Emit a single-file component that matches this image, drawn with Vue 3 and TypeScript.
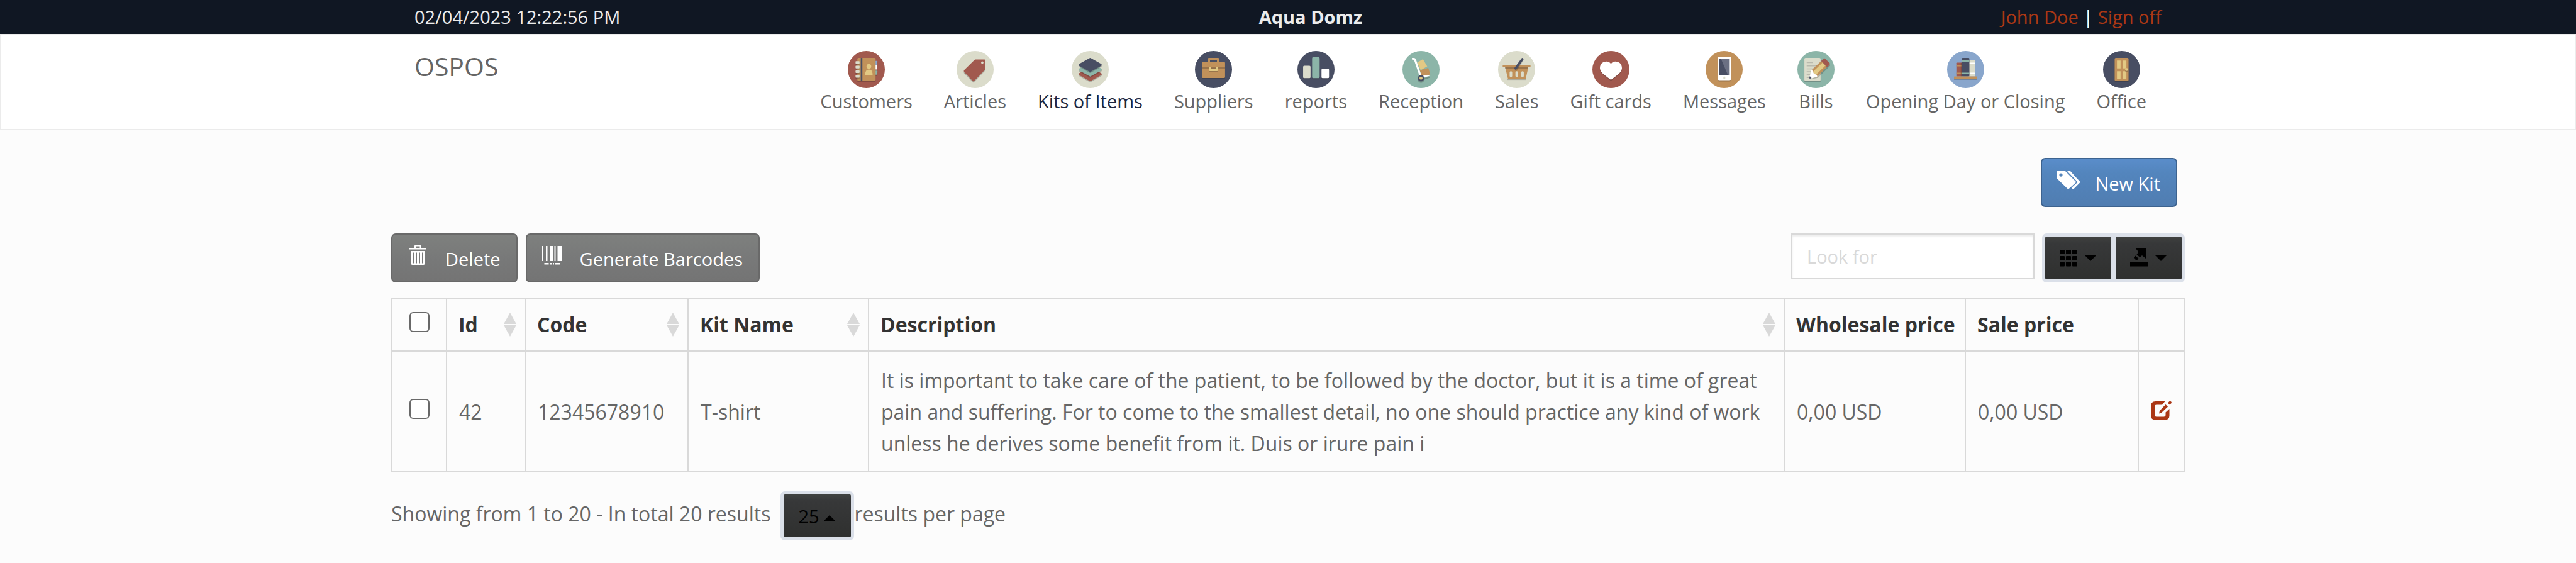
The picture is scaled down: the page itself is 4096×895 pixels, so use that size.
<script setup lang="ts">
import { ref } from 'vue'

interface Layer {
  d: string
  fill: string
}
interface Module {
  label: string
  disc: string
  layers: Layer[]
}

const navy = '#484e63'
const red = '#a1594e'
const tan = '#c1915a'
const beige = '#dbdccb'
const green = '#8cb5a8'
const blue = '#89a6cc'
const yellow = '#e2c984'
const white = '#ffffff'
const shade = 'rgba(35, 31, 32, 0.25)'

const box = (x: number, y: number, w: number, h: number, r = 0): string =>
  `M${x + r} ${y}h${w - 2 * r}a${r} ${r} 0 0 1 ${r} ${r}v${h - 2 * r}a${r} ${r} 0 0 1 ${-r} ${r}h${2 * r - w}a${r} ${r} 0 0 1 ${-r} ${-r}v${2 * r - h}a${r} ${r} 0 0 1 ${r} ${-r}z`
const dot = (cx: number, cy: number, r: number): string =>
  `M${cx - r} ${cy}a${r} ${r} 0 1 0 ${2 * r} 0a${r} ${r} 0 1 0 ${-2 * r} 0z`
const rhomb = (cy: number): string =>
  `M30.6 ${cy - 11.4}q1.4 -1.2 2.8 0l17.8 9.9q1.8 1.5 0 3l-17.8 10q-1.4 1.2 -2.8 0l-17.8 -10q-1.8 -1.5 0 -3z`

const rings = [17.5, 25.5, 33.5, 41.5]

const modules: Module[] = [
  {
    label: 'Customers',
    disc: red,
    layers: [
      { d: box(16.5, 14, 31.5, 40, 2), fill: shade },
      { d: box(46, 19, 5, 24, 1), fill: shade },
      { d: box(46, 17, 5, 7, 1), fill: blue },
      { d: box(46, 25, 5, 7, 1), fill: white },
      { d: box(46, 34, 5, 7, 1), fill: green },
      { d: box(16.5, 12, 31.5, 40, 2), fill: tan },
      { d: box(22.4, 12, 2.8, 40), fill: navy },
      { d: rings.map((y) => box(13.4, y + 2, 7, 4.5, 1)).join(''), fill: shade },
      { d: rings.map((y) => box(13.4, y, 7, 4.5, 1)).join(''), fill: beige },
      { d: dot(36.4, 26.7, 4.1) + 'M30 42v-3q1 -7 6.4 -7q5.6 0 6.4 7v3z', fill: yellow },
    ],
  },
  {
    label: 'Articles',
    disc: beige,
    layers: [
      { d: 'M31.8 16.7H48q1.4 0 1.4 1.4V34L30 54q-1 1 -2 0L13 38.5q-1 -1.5 0 -3z', fill: shade },
      { d: 'M31.8 14.7H48q1.4 0 1.4 1.4V32L30 52q-1 1 -2 0L13 36q-1 -1.5 0 -3z', fill: red },
      { d: dot(44.4, 20, 2), fill: beige },
    ],
  },
  {
    label: 'Kits of Items',
    disc: beige,
    layers: [
      { d: rhomb(42), fill: shade },
      { d: rhomb(40), fill: red },
      { d: rhomb(34), fill: shade },
      { d: rhomb(32), fill: green },
      { d: rhomb(26), fill: shade },
      { d: rhomb(24), fill: navy },
    ],
  },
  {
    label: 'Suppliers',
    disc: navy,
    layers: [
      { d: box(12, 20.7, 40, 28, 2), fill: shade },
      { d: 'M22 20v-6q0 -2 2 -2h16q2 0 2 2v6h-4v-4H26v4z', fill: tan },
      { d: box(12, 18.7, 40, 28, 2), fill: tan },
      { d: box(12, 28, 40, 2.6), fill: shade },
      { d: box(24, 30, 16, 6.6, 2), fill: shade },
      { d: 'M24 28h4v2.7h8V28h4v4.7q0 2 -2 2h-12q-2 0 -2 -2z', fill: yellow },
    ],
  },
  {
    label: 'reports',
    disc: navy,
    layers: [
      { d: box(9.8, 29, 12.8, 20, 2) + box(25.3, 29, 13, 20, 2) + box(41.5, 32, 13, 17, 2), fill: shade },
      { d: box(9.8, 25.5, 12.8, 21.5, 2), fill: beige },
      { d: box(25.3, 10.7, 13, 36.3, 2), fill: green },
      { d: box(41.5, 30.5, 13, 16.5, 2), fill: white },
    ],
  },
  {
    label: 'Reception',
    disc: green,
    layers: [
      { d: dot(32, 49.5, 5.5) + 'M37 47l10 -2.5v2l-10 3z', fill: shade },
      { d: 'M25.3 20l10 -6 7.4 12.5 -11.2 6.5z', fill: yellow },
      { d: 'M29.8 33.3l14.7 -4 3.5 11 -14.3 3.7z', fill: tan },
      { d: 'M16.5 12h3q3 0 4 3.2L33 43.5l11 -2.5q2.5 0 2.5 2l-14 4 -2.5 -2L20.5 17q-0.6 -2 -2.5 -2h-1.5q-1 -1.5 0 -3z', fill: white },
      { d: dot(32, 47, 5.5), fill: navy },
      { d: dot(32, 47, 2.7), fill: yellow },
    ],
  },
  {
    label: 'Sales',
    disc: beige,
    layers: [
      { d: 'M16 48h32v2H16z', fill: shade },
      { d: 'M12 27h40.4L48 47q-0.2 1 -1.2 1H18q-1 0 -1.2 -1z', fill: tan },
      { d: box(12, 28, 40, 2.4), fill: shade },
      { d: box(8, 24, 48, 4, 1), fill: tan },
      { d: [20, 30, 40].map((x) => box(x, 35, 4.4, 10, 2)).join(''), fill: beige },
      { d: 'M40.5 15l3 1.5 -11.5 18 -4 -1z', fill: shade },
      { d: 'M40.3 13q1.2 -1.5 2.7 -0.6t0.8 2.6L32 31q-1.5 1.8 -3 0.8t-0.6 -2.8z', fill: navy },
    ],
  },
  {
    label: 'Gift cards',
    disc: red,
    layers: [
      { d: 'M32 25c4 -8 19 -5 19 6c0 9 -14 16 -19 21c-5 -5 -19 -12 -19 -21c0 -11 15 -14 19 -6z', fill: shade },
      { d: 'M32 22.5c4 -7.5 19 -5 19 7c0 9 -14 15.5 -19 20.5c-5 -5 -19 -11.5 -19 -20.5c0 -12 15 -14.5 19 -7z', fill: white },
    ],
  },
  {
    label: 'Messages',
    disc: tan,
    layers: [
      { d: box(20.6, 12, 23.6, 40.5, 3), fill: shade },
      { d: box(20.6, 10, 23.6, 40.5, 3), fill: white },
      { d: box(23, 13, 18.4, 29), fill: navy },
      { d: 'M26.4 13h15v29h-2.7z', fill: '#6b7083' },
      { d: box(30.6, 44.2, 3.4, 3.6, 1), fill: beige },
    ],
  },
  {
    label: 'Bills',
    disc: green,
    layers: [
      { d: box(12, 14, 28, 40, 2), fill: shade },
      { d: box(12, 12, 28, 40, 2), fill: beige },
      {
        d: box(16, 19, 10.4, 2) + box(16, 25, 18, 1.6) + box(16, 30, 14, 1.6) + box(16, 35, 12, 1.6) + box(16, 40, 10, 1.6) + box(16, 45, 8, 1.6),
        fill: '#b9b9ad',
      },
      { d: 'M34.2 44.2l17 -17 5 -4v2.5L35.5 46.5 21 49z', fill: shade },
      { d: 'M24 33.3L41 17.3 51.3 27 34.2 44.2z', fill: tan },
      { d: 'M26.6 36L43.6 19.8 48.8 24.7 31.6 41.5z', fill: yellow },
      { d: 'M41 17.3l4 -4.3q1.3 -1.3 2.6 0l8 8q1.3 1.3 0 2.6L51.3 28z', fill: red },
      { d: 'M24 33.3q3 0 3.2 3.2q0.6 3.5 4 4q3 0 3 3.7L22 47.5q-1.5 0 -1.4 -1.5z', fill: white },
      { d: 'M21.4 43.5l3 3.2L22 47.6q-1.5 0.2 -1.4 -1.3z', fill: navy },
    ],
  },
  {
    label: 'Opening Day or Closing',
    disc: blue,
    layers: [
      { d: box(12, 46, 40, 4), fill: shade },
      { d: box(16, 20, 10, 24, 1), fill: red },
      { d: box(16, 24, 10, 2.7) + box(16, 37.3, 10, 2.7), fill: tan },
      { d: box(37, 16, 11, 28, 1), fill: beige },
      { d: box(37, 20, 11, 2.7) + box(37, 37.3, 11, 2.7), fill: white },
      { d: box(23.6, 20, 2, 24) + box(38.4, 16, 1.4, 28), fill: shade },
      { d: box(25.6, 12, 12.8, 32, 1.4), fill: navy },
      { d: box(25.6, 16, 12.8, 2.7) + box(25.6, 37.3, 12.8, 2.7), fill: green },
      { d: box(12, 44, 40, 4, 0.5), fill: tan },
    ],
  },
  {
    label: 'Office',
    disc: navy,
    layers: [
      { d: box(20, 14, 24, 40, 2), fill: shade },
      { d: box(20, 12, 24, 40, 2), fill: tan },
      { d: box(24, 16.5, 6.2, 13.5) + box(34, 16.5, 6.2, 13.5) + box(24, 35, 6.2, 13) + box(34, 35, 6.2, 13), fill: yellow },
      { d: dot(40.6, 34.4, 2.5), fill: shade },
      { d: dot(40.6, 32, 2.5), fill: yellow },
    ],
  },
]

const columns = [
  { key: 'id', label: 'Id', sortable: true },
  { key: 'code', label: 'Code', sortable: true },
  { key: 'name', label: 'Kit Name', sortable: true },
  { key: 'description', label: 'Description', sortable: true },
  { key: 'wholesale', label: 'Wholesale price', sortable: false },
  { key: 'sale', label: 'Sale price', sortable: false },
]

const kits = [
  {
    id: '42',
    code: '12345678910',
    name: 'T-shirt',
    description: [
      'It is important to take care of the patient, to be followed by the doctor, but it is a time of great',
      'pain and suffering. For to come to the smallest detail, no one should practice any kind of work',
      'unless he derives some benefit from it. Duis or irure pain i',
    ],
    wholesale: '0,00 USD',
    sale: '0,00 USD',
  },
]

const activeModule = 'Kits of Items'
const search = ref('')
const pageSize = ref('25')
</script>

<template>
  <div class="page">
    <header>
      <div class="topbar">
        <div class="container inset topbar-row">
          <time>02/04/2023 12:22:56 PM</time>
          <strong>Aqua Domz</strong>
          <div class="account">
            <a href="#user">John Doe</a><span> | </span><a href="#logout">Sign off</a>
          </div>
        </div>
      </div>
      <div class="navbar">
        <div class="container inset navbar-row">
          <a class="brand" href="#home">OSPOS</a>
          <nav class="modules">
            <a
              v-for="item in modules"
              :key="item.label"
              class="module"
              :class="{ active: item.label === activeModule }"
              href="#module"
            >
              <svg class="module-icon" viewBox="0 0 64 64" aria-hidden="true">
                <circle cx="32" cy="32" r="32" :fill="item.disc" />
                <path v-for="(layer, i) in item.layers" :key="i" :d="layer.d" :fill="layer.fill" />
              </svg>
              <span>{{ item.label }}</span>
            </a>
          </nav>
        </div>
      </div>
    </header>

    <main class="container">
      <div class="title-bar">
        <button class="btn btn-info" type="button">
          <svg class="btn-icon" viewBox="0 0 37 32" aria-hidden="true">
            <path fill-rule="evenodd" d="M0 3h13l17.500 17.500 -13 11.500L0 15zM6 6.500a2.600 2.600 0 1 0 0 5.200a2.600 2.600 0 1 0 0 -5.200z" />
            <path d="M16 3H21l16 17.500L25.500 32l-2.800 -2.500 10 -9z" />
          </svg>
          <span>New Kit</span>
        </button>
      </div>

      <div class="toolbar">
        <div class="toolbar-group">
          <button class="btn btn-default" type="button">
            <svg class="btn-icon" viewBox="0 0 37 32" aria-hidden="true">
              <path fill-rule="evenodd" d="M3 5h8V2q0 -2 2 -2h7q2 0 2 2v3h8v2.500H3zM13.500 2.400V5h6V2.400z" />
              <path fill-rule="evenodd" d="M5.500 10h22v20q0 2 -2 2h-18q-2 0 -2 -2zM8 12.500v17h2v-17zM13 12.500v17h2v-17zM18 12.500v17h2v-17zM23 12.500v17h2v-17z" />
            </svg>
            <span>Delete</span>
          </button>
          <button class="btn btn-default" type="button">
            <svg class="btn-icon" viewBox="0 0 37 32" aria-hidden="true">
              <path d="M0 2h2v24H0zM4 2h1v24H4zM6 2h2.500v24H6zM12.500 2h5.500v24h-5.500zM19.500 2h2v24h-2zM23 2h1.500v24H23zM26 2h5v24h-5z" />
              <path d="M3.500 29h7v2.500h-7zM13 29h2v2.500h-2zM17 29h2v2.500h-2zM21 29h7v2.500h-7z" />
            </svg>
            <span>Generate Barcodes</span>
          </button>
        </div>
        <div class="toolbar-search">
          <input v-model="search" class="search" type="text" placeholder="Look for" aria-label="Look for" />
          <div class="dark-group">
            <button class="dark" type="button" aria-label="Columns">
              <svg class="dark-icon" viewBox="0 0 28 32" aria-hidden="true">
                <path d="M1 3h6q1 0 1 1v5q0 1 -1 1H1q-1 0 -1 -1V4q0 -1 1 -1zM11 3h6q1 0 1 1v5q0 1 -1 1h-6q-1 0 -1 -1V4q0 -1 1 -1zM21 3h6q1 0 1 1v5q0 1 -1 1h-6q-1 0 -1 -1V4q0 -1 1 -1z" />
                <path d="M1 13h6q1 0 1 1v5q0 1 -1 1H1q-1 0 -1 -1v-5q0 -1 1 -1zM11 13h6q1 0 1 1v5q0 1 -1 1h-6q-1 0 -1 -1v-5q0 -1 1 -1zM21 13h6q1 0 1 1v5q0 1 -1 1h-6q-1 0 -1 -1v-5q0 -1 1 -1z" />
                <path d="M1 22.500h6q1 0 1 1v5q0 1 -1 1H1q-1 0 -1 -1v-5q0 -1 1 -1zM11 22.500h6q1 0 1 1v5q0 1 -1 1h-6q-1 0 -1 -1v-5q0 -1 1 -1zM21 22.500h6q1 0 1 1v5q0 1 -1 1h-6q-1 0 -1 -1v-5q0 -1 1 -1z" />
              </svg>
              <svg class="caret" viewBox="0 0 20 10" aria-hidden="true"><path d="M0 0h20L10 10z" /></svg>
            </button>
            <button class="dark" type="button" aria-label="Export">
              <svg class="dark-icon" viewBox="0 0 28 32" aria-hidden="true">
                <path d="M8.500 0.500H25V17l-6 -5 -3.500 3 -5 -4.500 3 -4z" />
                <path d="M8.500 12.500l5 4.500 -2.500 2.500q-5 -1 -5 -4.500z" />
                <path fill-rule="evenodd" d="M0 22.500h28v7H0zM23 25v1h2v-1z" />
              </svg>
              <svg class="caret" viewBox="0 0 20 10" aria-hidden="true"><path d="M0 0h20L10 10z" /></svg>
            </button>
          </div>
        </div>
      </div>

      <table class="kits">
        <colgroup>
          <col class="col-check" />
          <col v-for="column in columns" :key="column.key" :class="'col-' + column.key" />
          <col class="col-edit" />
        </colgroup>
        <thead>
          <tr>
            <th class="check"><input type="checkbox" aria-label="Select all" /></th>
            <th v-for="column in columns" :key="column.key" scope="col">
              <div class="th-inner">
                <span>{{ column.label }}</span>
                <svg v-if="column.sortable" class="sort" viewBox="0 0 20 38" aria-hidden="true">
                  <path d="M10 0l10 18H0zM0 20h20L10 38z" />
                </svg>
              </div>
            </th>
            <th></th>
          </tr>
        </thead>
        <tbody>
          <tr v-for="kit in kits" :key="kit.id">
            <td class="check"><input type="checkbox" :aria-label="'Select ' + kit.name" /></td>
            <td>{{ kit.id }}</td>
            <td>{{ kit.code }}</td>
            <td>{{ kit.name }}</td>
            <td>
              <template v-for="(line, i) in kit.description" :key="i"><br v-if="i > 0" />{{ line }}</template>
            </td>
            <td>{{ kit.wholesale }}</td>
            <td>{{ kit.sale }}</td>
            <td class="edit">
              <a href="#edit" aria-label="Edit kit">
                <svg class="edit-icon" viewBox="0 0 33 31" aria-hidden="true">
                  <path d="M22.500 1l-4.500 5.500H9q-3 0 -3 3v13q0 3 3 3h11.500q3 0 3 -3v-4L29.500 13v10.500q0 7 -7 7H7.500q-7.500 0 -7.500 -7V8.500Q0 1 7.500 1z" />
                  <path d="M23.500 6l3.500 3.500L17 19l-4 1.500 1 -4.500z" />
                  <path d="M27 3.500l3 -3q3 0.500 3 3l-3 3z" />
                </svg>
              </a>
            </td>
          </tr>
        </tbody>
      </table>

      <div class="pagination">
        <span class="summary">Showing from 1 to 20 - In total 20 results</span>
        <div class="page-size">
          <select v-model="pageSize" aria-label="Results per page">
            <option>10</option>
            <option>25</option>
            <option>50</option>
          </select>
          <svg class="caret" viewBox="0 0 20 10" aria-hidden="true"><path d="M0 10h20L10 0z" /></svg>
        </div>
        <span>results per page</span>
      </div>
    </main>
  </div>
</template>

<style>
html,
body {
  background: #fcfcfc;
}
</style>

<style scoped>
.page {
  font-family: "Open Sans", sans-serif;
  font-size: 32px;
  line-height: 50px;
  color: #666666;
}

.page *,
.page *::before {
  box-sizing: border-box;
}

a {
  color: #ab3715;
  text-decoration: none;
}

.container {
  max-width: 2852px;
  margin: 0 auto;
}

.inset {
  padding: 0 37px;
}

.topbar {
  background: #101723;
  color: #ebebeb;
  font-size: 29px;
  line-height: 54px;
}

.topbar-row {
  display: flex;
  justify-content: space-between;
}

.account {
  white-space: pre;
}

.account span {
  color: #ffffff;
}

.navbar {
  background: #ffffff;
  border: 2px solid #ebebeb;
}

.navbar-row {
  display: flex;
  justify-content: space-between;
  align-items: flex-start;
}

.brand {
  color: #666666;
  font-size: 41px;
  line-height: 98px;
}

.modules {
  display: flex;
  gap: 50px;
  padding: 25px 24px 24px 0;
}

.module {
  display: flex;
  flex-direction: column;
  align-items: center;
  color: #666666;
  font-size: 29px;
  line-height: 41px;
  white-space: nowrap;
}

.module.active {
  color: #1d2740;
}

.module-icon {
  width: 59px;
  height: 59px;
}

.title-bar {
  display: flex;
  justify-content: flex-end;
  padding: 44px 12px 42px 0;
}

.btn {
  display: flex;
  align-items: center;
  gap: 23px;
  height: 78px;
  padding: 0 25px 0 24px;
  border: 2px solid;
  border-radius: 7px;
  color: #ffffff;
  font-family: inherit;
  font-size: 29px;
  line-height: 41px;
}

.btn span {
  padding-top: 3px;
}

.btn-icon {
  width: 37px;
  height: 42px;
  padding-bottom: 10px;
  fill: #ffffff;
}

.btn-info {
  background: linear-gradient(#5a8dca, #5385bd 30%, #507db1);
  border-color: #3d638f;
}

.btn-default {
  background: linear-gradient(#7e807e, #787979 50%, #747474);
  border-color: #696969;
}

.toolbar,
.toolbar-group,
.toolbar-search {
  display: flex;
  align-items: flex-start;
}

.toolbar {
  justify-content: space-between;
  margin-bottom: 24px;
}

.toolbar-group {
  gap: 13px;
}

.toolbar-search {
  gap: 12px;
}

.search {
  width: 387px;
  height: 73px;
  padding: 0 23px;
  border: 2px solid #d9d9d9;
  border-radius: 0;
  background: #ffffff;
  box-shadow: inset 0 3px 3px rgba(0, 0, 0, 0.075);
  color: #666666;
  font-family: inherit;
  font-size: 29px;
}

.search::placeholder {
  color: #d9d9d9;
  opacity: 1;
}

.dark-group {
  display: flex;
  gap: 7px;
  padding: 5px;
  border-radius: 7px;
  background: #dbe0e9;
}

.dark {
  display: flex;
  align-items: center;
  gap: 11px;
  height: 68px;
  padding: 0 23px;
  border: 0;
  border-radius: 2px;
  background: linear-gradient(#404240, #373839 15%, #2f302f);
}

.dark-icon {
  width: 28px;
  height: 32px;
}

.caret {
  width: 20px;
  height: 10px;
}

.kits {
  width: 100%;
  table-layout: fixed;
  border-collapse: collapse;
}

.kits th,
.kits td {
  border: 2px solid #d9d9d9;
  padding: 21px 0 18px 19px;
  text-align: left;
  vertical-align: middle;
}

.kits th {
  padding: 16px 0 16px 18px;
  color: #333333;
  font-weight: 700;
}

.col-check {
  width: 87px;
}

.col-id {
  width: 125px;
}

.col-code {
  width: 259px;
}

.col-name {
  width: 287px;
}

.col-wholesale {
  width: 288px;
}

.col-sale {
  width: 275px;
}

.col-edit {
  width: 73px;
}

.th-inner {
  display: flex;
  align-items: center;
  justify-content: space-between;
  padding-right: 13px;
  white-space: nowrap;
}

.sort {
  width: 20px;
  height: 38px;
  fill: #d9d9d9;
}

.kits .check,
.kits .edit {
  padding: 0 0 8px;
  text-align: center;
  line-height: 0;
}

.kits .edit {
  padding-bottom: 2px;
}

.check input {
  appearance: none;
  width: 32px;
  height: 32px;
  margin: 0;
  border: 2px solid #696969;
  border-radius: 6px;
  background: #ffffff;
}

.edit-icon {
  width: 33px;
  height: 31px;
  fill: #ab3715;
}

.pagination {
  display: flex;
  align-items: flex-start;
  margin-top: 31px;
  line-height: 72px;
}

.summary {
  margin-right: 16px;
}

.page-size {
  display: grid;
  align-items: center;
  border: 5px solid #dbe0e9;
  border-radius: 7px;
  background: linear-gradient(#404240, #373839 15%, #2f302f);
}

.page-size > * {
  grid-area: 1 / 1;
}

.page-size select {
  appearance: none;
  width: 107px;
  height: 68px;
  padding: 0 0 0 23px;
  border: 0;
  background: transparent;
  color: #000000;
  font-family: inherit;
  font-size: 29px;
}

.page-size .caret {
  justify-self: end;
  margin: 8px 24px 0 0;
  pointer-events: none;
}
</style>
